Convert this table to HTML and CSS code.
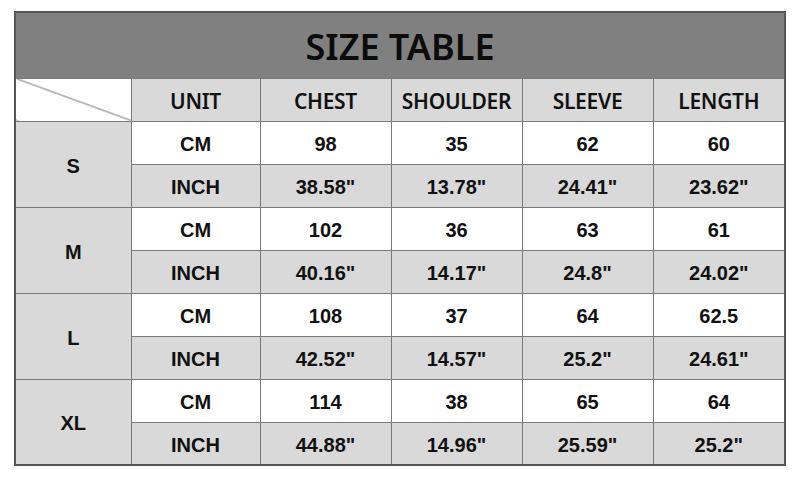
FILE: index.html
```html
<!DOCTYPE html>
<html>
<head>
<meta charset="utf-8">
<link rel="stylesheet" href="styles.css">
</head>
<body>
<div class="wrap">
<table class="size-table">
  <colgroup>
    <col class="c-size"><col class="c-unit"><col class="c-val"><col class="c-val"><col class="c-val"><col class="c-last">
  </colgroup>
  <tr class="title-row"><th colspan="6" class="title">SIZE TABLE</th></tr>
  <tr class="head-row">
    <th class="diag"></th>
    <th class="hd">UNIT</th>
    <th class="hd">CHEST</th>
    <th class="hd">SHOULDER</th>
    <th class="hd">SLEEVE</th>
    <th class="hd">LENGTH</th>
  </tr>
  <tr class="cm"><td rowspan="2" class="size">S</td><td>CM</td><td>98</td><td>35</td><td>62</td><td>60</td></tr>
  <tr class="inch"><td>INCH</td><td>38.58"</td><td>13.78"</td><td>24.41"</td><td>23.62"</td></tr>
  <tr class="cm"><td rowspan="2" class="size">M</td><td>CM</td><td>102</td><td>36</td><td>63</td><td>61</td></tr>
  <tr class="inch"><td>INCH</td><td>40.16"</td><td>14.17"</td><td>24.8"</td><td>24.02"</td></tr>
  <tr class="cm"><td rowspan="2" class="size">L</td><td>CM</td><td>108</td><td>37</td><td>64</td><td>62.5</td></tr>
  <tr class="inch"><td>INCH</td><td>42.52"</td><td>14.57"</td><td>25.2"</td><td>24.61"</td></tr>
  <tr class="cm"><td rowspan="2" class="size">XL</td><td>CM</td><td>114</td><td>38</td><td>65</td><td>64</td></tr>
  <tr class="inch"><td>INCH</td><td>44.88"</td><td>14.96"</td><td>25.59"</td><td>25.2"</td></tr>
</table>
</div>
</body>
</html>
```
FILE: styles.css
```css
html, body {
  margin: 0;
  padding: 0;
  background: #ffffff;
}
.wrap {
  padding: 11px 0 0 14px;
}
.size-table {
  border-collapse: collapse;
  table-layout: fixed;
  width: 772px;
  border: 2px solid #555;
  font-family: "Liberation Sans", Arial, sans-serif;
  font-weight: bold;
  color: #111;
}
.c-size { width: 116px; }
.c-unit { width: 129px; }
.c-val { width: 131px; }
.c-last { width: 132px; }
.size-table th, .size-table td {
  border: 1px solid #7a7a7a;
  text-align: center;
  vertical-align: middle;
  padding: 0;
}
.title-row { height: 66px; }
.title {
  background: #808080;
  font-family: "Noto Sans", "Open Sans", sans-serif;
  font-size: 36px;
  font-weight: 600;
  color: #0c0c0c;
  padding-top: 2px !important;
}
.head-row { height: 43px; }
.hd {
  background: #d9d9d9;
  font-family: "Noto Sans", "Open Sans", sans-serif;
  font-weight: 600;
  font-size: 21px;
  letter-spacing: -0.3px;
  padding-top: 2px !important;
}
.diag {
  background: #fff linear-gradient(to top right, transparent calc(50% - 1px), #7a7a7a 50%, transparent calc(50% + 1px));
}
.cm, .inch { height: 43px; }
.size-table td {
  font-size: 20px;
  padding-top: 4px;
}
.cm td { background: #ffffff; }
.inch td { background: #d9d9d9; }
.cm td.size { background: #d9d9d9; }
```
